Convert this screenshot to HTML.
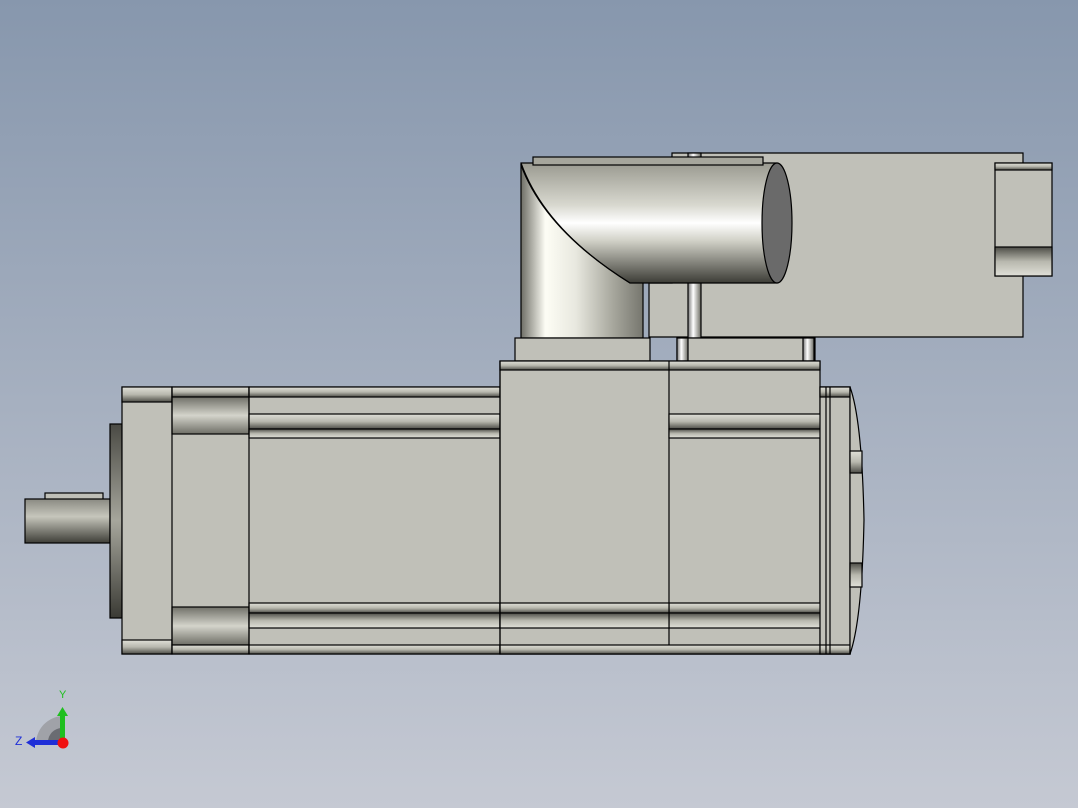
<!DOCTYPE html>
<html><head><style>html,body{margin:0;padding:0;width:1078px;height:808px;overflow:hidden}</style></head><body>
<svg width="1078" height="808" viewBox="0 0 1078 808" xmlns="http://www.w3.org/2000/svg" font-family="Liberation Sans, sans-serif">
<defs>
<linearGradient id="bg" x1="0" y1="0" x2="0" y2="1"><stop offset="0" stop-color="#8797ad"/><stop offset="1" stop-color="#c5c9d3"/></linearGradient>
<linearGradient id="cylH" x1="0" y1="0" x2="0" y2="1"><stop offset="0" stop-color="#9a9a90"/><stop offset="0.35" stop-color="#d8d8cf"/><stop offset="0.5" stop-color="#ffffff"/><stop offset="0.65" stop-color="#d0d0c6"/><stop offset="1" stop-color="#3c3c36"/></linearGradient>
<linearGradient id="cylV" x1="0" y1="0" x2="1" y2="0"><stop offset="0" stop-color="#6e6e66"/><stop offset="0.2" stop-color="#fdfdf5"/><stop offset="0.45" stop-color="#e8e8df"/><stop offset="0.75" stop-color="#a8a89e"/><stop offset="1" stop-color="#76766e"/></linearGradient>
<linearGradient id="band" x1="0" y1="0" x2="0" y2="1"><stop offset="0" stop-color="#e0e0d8"/><stop offset="0.5" stop-color="#b8b8ae"/><stop offset="1" stop-color="#4c4c46"/></linearGradient>
<linearGradient id="bandD" x1="0" y1="0" x2="0" y2="1"><stop offset="0" stop-color="#4c4c46"/><stop offset="0.5" stop-color="#b8b8ae"/><stop offset="1" stop-color="#e0e0d8"/></linearGradient>
<linearGradient id="rec" x1="0" y1="0" x2="0" y2="1"><stop offset="0" stop-color="#707068"/><stop offset="0.5" stop-color="#d4d4cb"/><stop offset="1" stop-color="#6e6e66"/></linearGradient>
<linearGradient id="shaft" x1="0" y1="0" x2="0" y2="1"><stop offset="0" stop-color="#8a8a82"/><stop offset="0.4" stop-color="#c6c6bc"/><stop offset="1" stop-color="#3e3e38"/></linearGradient>
<linearGradient id="pilot" x1="0" y1="0" x2="0" y2="1"><stop offset="0" stop-color="#4a4a44"/><stop offset="0.5" stop-color="#a6a69c"/><stop offset="1" stop-color="#3a3a34"/></linearGradient>
<linearGradient id="pin" x1="0" y1="0" x2="1" y2="0"><stop offset="0" stop-color="#777"/><stop offset="0.4" stop-color="#fff"/><stop offset="1" stop-color="#6a6a62"/></linearGradient>
</defs>
<rect width="1078" height="808" fill="url(#bg)"/>
<g stroke="#000" stroke-width="1.2">
<!-- rear box -->
<path d="M672 153 L1023 153 L1023 337 L649 337 L649 283 L672 283 Z" fill="#c0c0b8"/>
<rect x="995" y="163" width="57" height="113" fill="#c0c0b8"/>
<rect x="995" y="163" width="57" height="7" fill="url(#band)"/>
<rect x="995" y="247" width="57" height="29" fill="url(#bandD)"/>
<rect x="688" y="153" width="13" height="185" fill="url(#pin)"/>
<!-- elbow -->
<rect x="521" y="165" width="122" height="173" fill="url(#cylV)"/>
<path d="M521 163 L521 165 Q545 230 630 283 L777 283 L777 163 Z" fill="url(#cylH)"/>
<path d="M521 163 Q545 230 630 283" fill="none"/>
<ellipse cx="777" cy="223" rx="15" ry="60" fill="#6a6a6a"/>
<rect x="533" y="157" width="230" height="8" fill="#a6a69c"/>
<!-- connector bases -->
<rect x="515" y="338" width="135" height="23" fill="#c0c0b8"/>
<rect x="677" y="338" width="138" height="23" fill="#c0c0b8"/>
<rect x="677" y="338" width="11" height="23" fill="url(#pin)"/>
<rect x="803" y="338" width="11" height="23" fill="url(#pin)"/>
<!-- shaft -->
<rect x="45" y="493" width="58" height="7" fill="#c0c0b8"/>
<rect x="25" y="499" width="85" height="44" fill="url(#shaft)"/>
<rect x="110" y="424" width="12" height="194" fill="url(#pilot)"/>
<!-- main body -->
<rect x="122" y="387" width="728" height="267" fill="#c0c0b8"/>
<rect x="122" y="387" width="50" height="15" fill="url(#band)"/>
<rect x="122" y="640" width="50" height="14" fill="url(#band)"/>
<rect x="172" y="387" width="77" height="10" fill="url(#band)"/>
<rect x="172" y="397" width="77" height="37" fill="url(#rec)"/>
<rect x="172" y="607" width="77" height="38" fill="url(#rec)"/>
<rect x="172" y="645" width="77" height="9" fill="url(#band)"/>
<rect x="249" y="387" width="251" height="10" fill="url(#band)"/>
<rect x="249" y="414" width="251" height="15" fill="url(#band)"/>
<rect x="249" y="429" width="251" height="9" fill="url(#bandD)"/>
<rect x="249" y="603" width="251" height="10" fill="url(#band)"/>
<rect x="249" y="613" width="251" height="15" fill="url(#bandD)"/>
<rect x="249" y="645" width="251" height="9" fill="url(#band)"/>
<line x1="172" y1="387" x2="172" y2="654"/>
<line x1="249" y1="387" x2="249" y2="654"/>
<!-- junction box -->
<rect x="500" y="361" width="320" height="293" fill="#c0c0b8"/>
<rect x="500" y="361" width="320" height="9" fill="url(#band)"/>
<line x1="669" y1="361" x2="669" y2="654"/>
<rect x="669" y="414" width="181" height="15" fill="url(#band)"/>
<rect x="669" y="429" width="181" height="9" fill="url(#bandD)"/>
<rect x="669" y="603" width="181" height="10" fill="url(#band)"/>
<rect x="669" y="613" width="181" height="15" fill="url(#bandD)"/>
<rect x="500" y="603" width="169" height="10" fill="url(#band)"/>
<rect x="500" y="613" width="169" height="15" fill="url(#bandD)"/>
<rect x="500" y="645" width="350" height="9" fill="url(#band)"/>
<line x1="500" y1="361" x2="500" y2="654"/>
<!-- rear end -->
<rect x="820" y="387" width="30" height="267" fill="#c0c0b8"/>
<rect x="820" y="387" width="30" height="10" fill="url(#band)"/>
<rect x="820" y="645" width="30" height="9" fill="url(#band)"/>
<line x1="826" y1="387" x2="826" y2="654"/>
<line x1="830" y1="387" x2="830" y2="654"/>
<path d="M850 387 Q862 420 864 520 Q862 620 850 654 Z" fill="#c0c0b8"/>
<rect x="850" y="451" width="12" height="22" fill="url(#band)"/>
<rect x="850" y="563" width="12" height="24" fill="url(#bandD)"/>
</g>
<!-- triad -->
<path d="M36 742 A28 28 0 0 1 62 716 L62 742 Z" fill="#a0a2a8"/>
<path d="M48 742 A14 14 0 0 1 62 728 L62 742 Z" fill="#6a6c72"/>
<rect x="60" y="714" width="5" height="28" fill="#1fbf1f"/>
<polygon points="57,716 62.5,707 68,716" fill="#1fbf1f"/>
<rect x="33" y="740" width="29" height="5" fill="#1f2fd8"/>
<polygon points="35,737 26,742.5 35,748" fill="#1f2fd8"/>
<circle cx="63" cy="743" r="5.5" fill="#f01010"/>
<text x="59" y="698" font-size="11" fill="#1fbf1f">Y</text>
<text x="15" y="745" font-size="12" fill="#1f2fd8">Z</text>
</svg>
</body></html>
